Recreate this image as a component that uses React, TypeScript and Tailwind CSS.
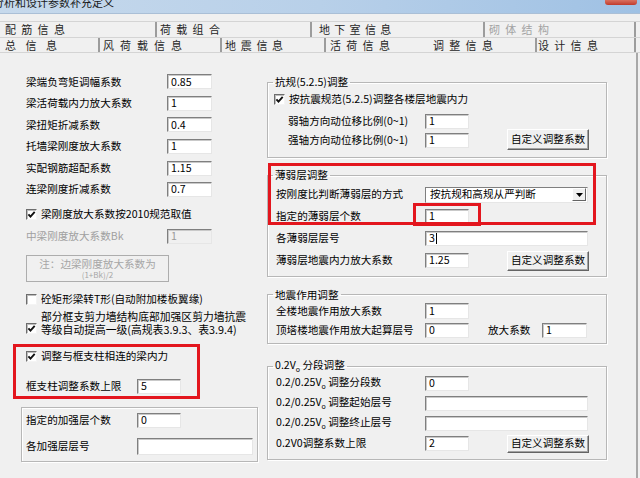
import type { ReactNode } from 'react';

// Win-classic style controls, sized to the 640x478 capture

function CheckBox({ checked = false }: { checked?: boolean }) {
  return (
    <span className="flex h-[11px] w-[11px] shrink-0 items-center justify-center border border-t-[#6d6d6d] border-l-[#6d6d6d] border-r-[#f4f4f4] border-b-[#f4f4f4] bg-white shadow-[inset_1px_1px_0_#bdbdbd]">
      {checked && (
        <svg viewBox="0 0 9 9" className="h-[9px] w-[9px]">
          <path d="M1.4 4.3 L3.5 6.6 L7.7 1.9" fill="none" stroke="#111" strokeWidth={1.9} />
        </svg>
      )}
    </span>
  );
}

function TextBox({
  value = '',
  className = 'w-[44px]',
  disabled = false,
  caret = false,
}: {
  value?: string;
  className?: string;
  disabled?: boolean;
  caret?: boolean;
}) {
  return (
    <div
      className={`flex h-[15px] shrink-0 items-center border border-t-[#7f7f7f] border-l-[#7f7f7f] border-r-[#e6e6e6] border-b-[#e6e6e6] pl-[3px] text-[10.6px] leading-none shadow-[inset_1px_1px_0_#c9c9c9] ${
        disabled ? 'bg-[#f0f0f0] text-[#9a9a9a]' : 'bg-white text-black'
      } ${className}`}
    >
      {value}
      {caret && <span className="ml-[1px] h-[11px] w-px bg-black" />}
    </div>
  );
}

function Button({ children, className = 'h-[21px]' }: { children: ReactNode; className?: string }) {
  return (
    <div
      className={`flex w-[82px] shrink-0 items-center justify-center border border-t-white border-l-white border-r-[#646464] border-b-[#646464] bg-[#f0f0f0] text-[10.6px] leading-none shadow-[inset_-1px_-1px_0_#a3a3a3] ${className}`}
    >
      {children}
    </div>
  );
}

function GroupBox({ title, className, children }: { title: ReactNode; className: string; children: ReactNode }) {
  return (
    <fieldset className={`ml-[7px] w-[340px] border border-[#b7b7b7] shadow-[1px_1px_0_#ffffff,inset_1px_1px_0_#ffffff] ${className}`}>
      <legend className="ml-[5px] px-[2px] text-[10.6px] leading-[14px]">{title}</legend>
      {children}
    </fieldset>
  );
}

function V0() {
  return (
    <>
      V<span className="align-sub text-[7px]">o</span>
    </>
  );
}

const tabText = 'text-[11px] leading-none text-[#262626]';

export default function App() {
  const leftRows = [
    ['梁端负弯矩调幅系数', '0.85'],
    ['梁活荷载内力放大系数', '1'],
    ['梁扭矩折减系数', '0.4'],
    ['托墙梁刚度放大系数', '1'],
    ['实配钢筋超配系数', '1.15'],
    ['连梁刚度折减系数', '0.7'],
  ];

  return (
    <div className="relative h-[478px] w-[640px] overflow-hidden bg-[#f0f0f0] font-['Noto_Sans_CJK_SC','Liberation_Sans',sans-serif] text-black">
      {/* title bar */}
      <div className="relative h-[14px] overflow-hidden border-b border-[#aabfd6] bg-gradient-to-r from-[#c6d9ec] via-[#b8d0e9] to-[#9fc1e4]">
        <div className="-ml-[7px] -mt-[5px] text-[11px] leading-[14px] text-[#1b1b1b]">分析和设计参数补充定义</div>
        <div className="absolute left-[605px] top-0 h-[5px] w-[32px] rounded-b-[3px] bg-gradient-to-b from-[#d9705f] to-[#c0392b]" />
      </div>

      {/* tabs */}
      <div className="mt-[7px] border-t border-[#d4d4d4]">
        <div className="flex h-[15px] items-center">
          <div className="flex h-full w-[155px] items-center pl-[5px]">
            <span className={`${tabText} tracking-[5.3px]`}>配筋信息</span>
          </div>
          <div className="flex h-full w-[155px] items-center border-l-2 border-[#9c9c9c] pl-[3px]">
            <span className={`${tabText} tracking-[5.3px]`}>荷载组合</span>
          </div>
          <div className="flex h-full w-[173px] items-center border-l-2 border-[#9c9c9c] pl-[7px]">
            <span className={`${tabText} tracking-[4.3px]`}>地下室信息</span>
          </div>
          <div className="flex h-full w-[153px] items-center border-x-2 border-[#9c9c9c] pl-[4px]">
            <span className="text-[11px] leading-none tracking-[5.3px] text-[#a3a3a3]">砌体结构</span>
          </div>
        </div>
        <div className="flex h-[16px] items-center border-y border-[#d4d4d4]">
          <div className="flex h-full w-[98px] items-center pl-[5px]">
            <span className={`${tabText} tracking-[9.5px]`}>总信息</span>
          </div>
          <div className="flex h-full w-[122px] items-center border-l-2 border-[#9c9c9c] pl-[3px]">
            <span className={`${tabText} tracking-[6px]`}>风荷载信息</span>
          </div>
          <div className="flex h-full w-[104px] items-center border-l-2 border-[#9c9c9c] pl-[3px]">
            <span className={`${tabText} tracking-[4.7px]`}>地震信息</span>
          </div>
          <div className="flex h-full w-[104px] items-center border-l-2 border-[#9c9c9c] pl-[4px]">
            <span className={`${tabText} tracking-[5.3px]`}>活荷信息</span>
          </div>
          <div className="flex h-full w-[107px] items-center pl-[5px]">
            <span className={`${tabText} tracking-[5.3px]`}>调整信息</span>
          </div>
          <div className="flex h-full w-[101px] items-center border-x-2 border-[#9c9c9c] pl-[1px]">
            <span className={`${tabText} tracking-[5.3px]`}>设计信息</span>
          </div>
        </div>
      </div>

      {/* panel */}
      <div className="flex h-[425px] w-[638px] border-r-2 border-[#a8a8a8] text-[10.6px] leading-none">
        {/* left column */}
        <div className="w-[260px] pt-[18px]">
          {leftRows.map(([label, value]) => (
            <div key={label} className="flex h-[21.6px] items-center pl-[26px]">
              <span className="w-[141px]">{label}</span>
              <TextBox value={value} className="w-[45px]" />
            </div>
          ))}

          <div className="mt-[3px] flex h-[22px] items-center gap-[4px] pl-[26px]">
            <CheckBox checked />
            <span>梁刚度放大系数按2010规范取值</span>
          </div>
          <div className="flex h-[22px] items-center pl-[26px]">
            <span className="w-[141px] text-[#a0a0a0]">中梁刚度放大系数Bk</span>
            <TextBox value="1" className="w-[45px]" disabled />
          </div>
          <div className="ml-[26px] mt-[7px] flex h-[27px] w-[143px] flex-col items-center justify-center border border-[#adadad] text-[#a6a6a6]">
            <span className="text-[10.6px] leading-[12px]">注：边梁刚度放大系数为</span>
            <span className="text-[8px] leading-[9px]">(1+Bk)/2</span>
          </div>

          <div className="mt-[9px] flex h-[18px] items-center gap-[4px] pl-[26px]">
            <CheckBox />
            <span>砼矩形梁转T形(自动附加楼板翼缘)</span>
          </div>
          <div className="mt-[1px] flex items-end gap-[4px] pl-[26px]">
            <span className="mb-[2px]">
              <CheckBox checked />
            </span>
            <div className="text-[10.8px] leading-[13px]">
              <div>部分框支剪力墙结构底部加强区剪力墙抗震</div>
              <div>等级自动提高一级(高规表3.9.3、表3.9.4)</div>
            </div>
          </div>

          <div className="mt-[11px] flex h-[20px] items-center gap-[4px] pl-[26px]">
            <CheckBox checked />
            <span>调整与框支柱相连的梁内力</span>
          </div>
          <div className="mt-[10px] flex h-[20px] items-center pl-[26px]">
            <span className="w-[111px]">框支柱调整系数上限</span>
            <TextBox value="5" />
          </div>

          <div className="ml-[21px] mt-[10px] w-[237px] border border-[#b7b7b7] pb-[1px] shadow-[1px_1px_0_#ffffff,inset_1px_1px_0_#ffffff]">
            <div className="flex h-[26px] items-center pl-[4px]">
              <span className="w-[111px]">指定的加强层个数</span>
              <TextBox value="0" />
            </div>
            <div className="flex h-[26px] items-center pl-[4px]">
              <span className="w-[111px]">各加强层层号</span>
              <TextBox className="h-[17px] w-[116px]" />
            </div>
          </div>
        </div>

        {/* right column */}
        <div className="flex-1 pt-[22px]">
          <GroupBox title="抗规(5.2.5)调整" className="pb-[7.5px]">
            <div className="flex h-[20px] items-center gap-[4px] pl-[6px]">
              <CheckBox checked />
              <span>按抗震规范(5.2.5)调整各楼层地震内力</span>
            </div>
            <div className="mt-[2.5px] flex items-end">
              <div className="pl-[20px]">
                <div className="flex h-[19px] items-center">
                  <span className="w-[137px]">弱轴方向动位移比例(0~1)</span>
                  <TextBox value="1" />
                </div>
                <div className="flex h-[19px] items-center">
                  <span className="w-[137px]">强轴方向动位移比例(0~1)</span>
                  <TextBox value="1" />
                </div>
              </div>
              <div className="ml-[38px]">
                <Button>自定义调整系数</Button>
              </div>
            </div>
          </GroupBox>

          <GroupBox title="薄弱层调整" className="mt-[10px] pb-[4px] pt-[1.5px]">
            <div className="flex h-[22px] items-center pl-[8px]">
              <span className="w-[149px]">按刚度比判断薄弱层的方式</span>
              <div className="flex h-[16px] w-[163px] items-center border border-t-[#7f7f7f] border-l-[#7f7f7f] border-r-[#e6e6e6] border-b-[#e6e6e6] bg-white pl-[4px]">
                <span className="flex-1">按抗规和高规从严判断</span>
                <span className="mr-px flex h-[13px] w-[14px] items-center justify-center border border-t-white border-l-white border-r-[#646464] border-b-[#646464] bg-[#f0f0f0]">
                  <svg viewBox="0 0 7 4" className="h-[4px] w-[7px]">
                    <path d="M0 0 H7 L3.5 4 Z" fill="#000" />
                  </svg>
                </span>
              </div>
            </div>
            <div className="flex h-[22px] items-center pl-[8px]">
              <span className="w-[149px]">指定的薄弱层个数</span>
              <TextBox value="1" className="h-[16px] w-[44px]" />
            </div>
            <div className="flex h-[22px] items-center pl-[8px]">
              <span className="w-[149px]">各薄弱层层号</span>
              <TextBox value="3" caret className="w-[163px]" />
            </div>
            <div className="flex h-[22px] items-center pl-[8px]">
              <span className="w-[149px]">薄弱层地震内力放大系数</span>
              <TextBox value="1.25" />
              <div className="ml-[38px]">
                <Button className="h-[20px]">自定义调整系数</Button>
              </div>
            </div>
          </GroupBox>

          <GroupBox title="地震作用调整" className="mt-[11px] pb-[3px]">
            <div className="flex h-[19px] items-center pl-[8px]">
              <span className="w-[149px]">全楼地震作用放大系数</span>
              <TextBox value="1" className="h-[16px] w-[44px]" />
            </div>
            <div className="flex h-[19px] items-center pl-[8px]">
              <span className="w-[149px]">顶塔楼地震作用放大起算层号</span>
              <TextBox value="0" />
              <span className="ml-[19px] w-[54px]">放大系数</span>
              <TextBox value="1" className="w-[45px]" />
            </div>
          </GroupBox>

          <GroupBox
            title={
              <>
                0.2<V0 /> 分段调整
              </>
            }
            className="mt-[14px] pb-[5px]"
          >
            <div className="-mt-[2px]">
              <div className="flex h-[20px] items-center pl-[8px]">
                <span className="w-[149px]">
                  0.2/0.25<V0 /> 调整分段数
                </span>
                <TextBox value="0" />
              </div>
              <div className="flex h-[20px] items-center pl-[8px]">
                <span className="w-[149px]">
                  0.2/0.25<V0 /> 调整起始层号
                </span>
                <TextBox className="w-[163px]" />
              </div>
              <div className="flex h-[20px] items-center pl-[8px]">
                <span className="w-[149px]">
                  0.2/0.25<V0 /> 调整终止层号
                </span>
                <TextBox className="w-[163px]" />
              </div>
              <div className="flex h-[20px] items-center pl-[8px]">
                <span className="w-[149px]">0.2V0调整系数上限</span>
                <TextBox value="2" />
                <div className="ml-[38px]">
                  <Button className="h-[18px]">自定义调整系数</Button>
                </div>
              </div>
            </div>
          </GroupBox>
        </div>
      </div>

      {/* red annotation boxes drawn over the dialog */}
      <div className="absolute left-[13px] top-[344px] h-[55px] w-[187px] border-[3px] border-[#e3161e]" />
      <div className="absolute left-[268px] top-[163px] h-[62px] w-[328px] border-[3px] border-[#e3161e]" />
      <div className="absolute left-[413px] top-[203px] h-[23px] w-[68px] border-[3px] border-[#e3161e]" />
    </div>
  );
}
